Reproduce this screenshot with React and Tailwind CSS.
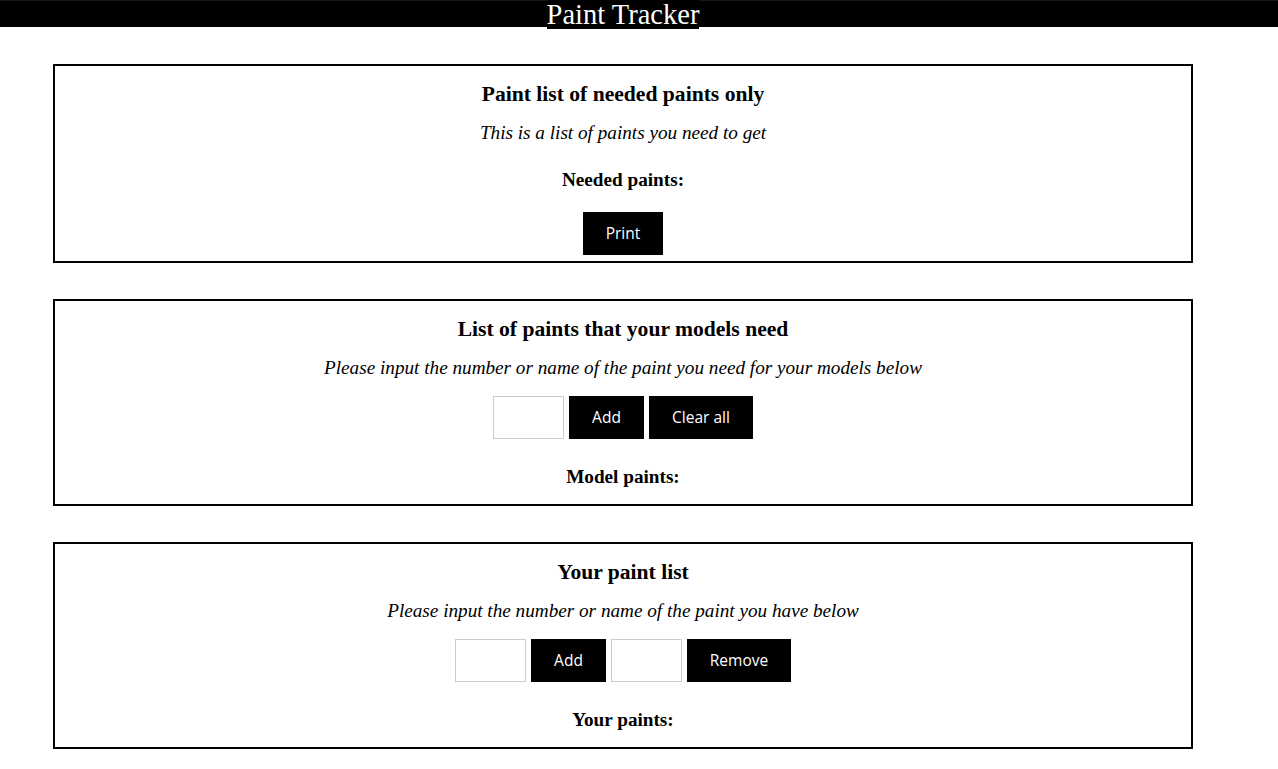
import React from "react";

const serif = "font-['Liberation_Serif','Times_New_Roman',serif]";
const btn = "bg-black text-white h-[43px] font-['Open_Sans',sans-serif] text-[15.5px] flex items-center justify-center pt-px";

function Input() {
  return <div className="w-[71px] h-[43px] border border-[#cccccc] bg-white" />;
}

export default function App() {
  return (
    <div className={`${serif} bg-white text-black min-h-[769px]`}>
      <div className="h-[27px] bg-black flex justify-center pr-[32px] border-t border-[#161616]">
        <span className="bg-black text-white text-[28.5px] leading-[29px] h-[29px] -mt-px">Paint Tracker</span>
      </div>

      <div className="ml-[53px] w-[1140px] mt-[37px] flex flex-col gap-[36px]">
        <div className="border-2 border-black h-[199px] flex flex-col items-center pt-[16px]">
          <div className="text-[21.6px] font-bold leading-[24px]">Paint list of needed paints only</div>
          <div className="text-[19.2px] italic leading-[22px] mt-[16px]">This is a list of paints you need to get</div>
          <div className="text-[19.2px] font-bold leading-[22px] mt-[25px]">Needed paints:</div>
          <div className={`${btn} w-[80px] mt-[21px]`}>Print</div>
        </div>

        <div className="border-2 border-black h-[207px] flex flex-col items-center pt-[16px]">
          <div className="text-[21.6px] font-bold leading-[24px]">List of paints that your models need</div>
          <div className="text-[19.2px] italic leading-[22px] mt-[16px]">Please input the number or name of the paint you need for your models below</div>
          <div className="flex gap-[5px] mt-[17px]">
            <Input />
            <div className={`${btn} w-[75px]`}>Add</div>
            <div className={`${btn} w-[104px]`}>Clear all</div>
          </div>
          <div className="text-[19.2px] font-bold leading-[22px] mt-[27px]">Model paints:</div>
        </div>

        <div className="border-2 border-black h-[207px] flex flex-col items-center pt-[16px]">
          <div className="text-[21.6px] font-bold leading-[24px]">Your paint list</div>
          <div className="text-[19.2px] italic leading-[22px] mt-[16px]">Please input the number or name of the paint you have below</div>
          <div className="flex gap-[5px] mt-[17px]">
            <Input />
            <div className={`${btn} w-[75px]`}>Add</div>
            <Input />
            <div className={`${btn} w-[104px]`}>Remove</div>
          </div>
          <div className="text-[19.2px] font-bold leading-[22px] mt-[27px]">Your paints:</div>
        </div>
      </div>
    </div>
  );
}
